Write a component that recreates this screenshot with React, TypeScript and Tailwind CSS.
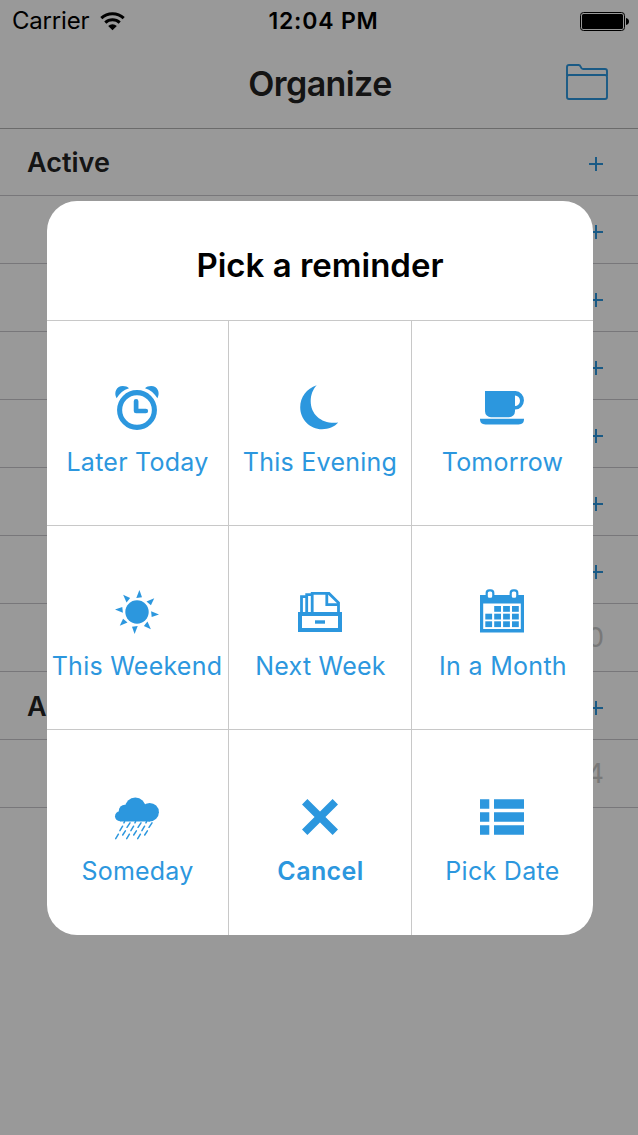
import type { ReactNode } from "react";

function Glyph({ children }: { children: ReactNode }) {
  return (
    <svg viewBox="0 0 44 44" className="h-11 w-11 shrink-0 overflow-visible" fill="currentColor">
      {children}
    </svg>
  );
}

const AlarmIcon = () => (
  <Glyph>
    <circle cx="22" cy="24" r="17.4" fill="none" stroke="currentColor" strokeWidth="5.1" />
    <path d="M21.1 15.3V25H30.8" fill="none" stroke="currentColor" strokeWidth="4.7" strokeLinecap="round" strokeLinejoin="round" />
    <path d="M1.6 12.3C-1.6 6.4 1.6 0 7.8 0C10.4 0 12.6.8 14 2.2C8.6 3.9 4.4 7.4 1.6 12.3Z" />
    <path d="M42.4 12.3C45.6 6.4 42.4 0 36.2 0C33.6 0 31.4.8 30 2.2C35.4 3.9 39.6 7.4 42.4 12.3Z" />
  </Glyph>
);

const MoonIcon = () => (
  <Glyph>
    <path d="M18.7-.8C8.5 2.6 2.2 11 2.2 21.2C2.2 33.4 11.8 43.2 24 43.2C30.6 43.2 36.4 41 40.2 36.6C24.5 38.6 12.7 29 12.7 15.2C12.7 8.8 14.9 3.2 18.7-.8Z" />
  </Glyph>
);

const CupIcon = () => (
  <Glyph>
    <path fillRule="evenodd" d="M5 5H35.5A8.7 9.2 0 0 1 35 23.4V25.3A6 6 0 0 1 29 31.3H11A6 6 0 0 1 5 25.3ZM35 9.4V20A5 5.3 0 0 0 35 9.4Z" />
    <path d="M0 32.8H44C44 36.6 42.5 38.4 38.5 38.4H5.5C1.5 38.4 0 36.6 0 32.8Z" />
  </Glyph>
);

const SunIcon = () => (
  <Glyph>
    <circle cx="22" cy="22" r="11.7" />
    {[0, 45, 90, 135, 180, 225, 270, 315].map((angle) => (
      <path key={angle} d="M24.4 0L21.3 7.9L27 7.3Z" transform={`rotate(${angle} 22 22)`} />
    ))}
  </Glyph>
);

const DrawerIcon = () => (
  <Glyph>
    <path fillRule="evenodd" d="M0 22H44V42H0ZM4 26V38H40V26Z" />
    <path d="M17 30.3H27V33.7H17Z" />
    <path d="M3.5 23V6.7H8.5M8.7 23V4.6H13.5M14.2 23V3.4H31L40.5 12.8V23M28.8 3.4V14.6H40.5" fill="none" stroke="currentColor" strokeWidth="2.8" />
  </Glyph>
);

const CalendarIcon = () => (
  <Glyph>
    <path fillRule="evenodd" d="M0 5H44V42.4H0ZM3.2 13.4V39H40.8V13.4Z" />
    {[16, 23.7, 31.3].map((y, row) =>
      [5.3, 14.2, 23.1, 32].map((x, column) =>
        row === 0 && column === 0 ? null : <rect key={`${x}-${y}`} x={x} y={y} width="6.8" height="5.8" />,
      ),
    )}
    {[10, 34].map((cx) => (
      <rect key={cx} x={cx - 3.3} y="0.3" width="6.6" height="8.6" rx="2.6" className="fill-white" stroke="currentColor" strokeWidth="2.2" />
    ))}
  </Glyph>
);

const RainIcon = () => (
  <Glyph>
    <circle cx="5" cy="21.3" r="5" />
    <circle cx="9.8" cy="15.8" r="6" />
    <circle cx="20.3" cy="12.7" r="10.3" />
    <circle cx="34.6" cy="17.2" r="9.3" />
    <path d="M5 14H35V26.4H5Z" />
    <g fill="none" stroke="currentColor" strokeWidth="1.5" strokeLinecap="round">
      {[0, 11, 22].map((dx) => (
        <path
          key={dx}
          transform={`translate(${dx} 0)`}
          d="M9.6 26.6L8.9 27.9M7.6 31.2L4.9 35.6M3.4 39.2L.7 43.6M15 27.9L12 32.3M10.4 35.8L7.7 40"
        />
      ))}
    </g>
  </Glyph>
);

const CloseIcon = () => (
  <Glyph>
    <path d="M6.7 6.7L37.3 37.3M37.3 6.7L6.7 37.3" fill="none" stroke="currentColor" strokeWidth="7.6" />
  </Glyph>
);

const ListIcon = () => (
  <Glyph>
    <path d="M0 4.2H9.3V13.8H0ZM14 4.2H44V13.8H14ZM0 17.2H9.3V26.8H0ZM14 17.2H44V26.8H14ZM0 30.2H9.3V39.8H0ZM14 30.2H44V39.8H14Z" />
  </Glyph>
);

const options = [
  { label: "Later Today", icon: <AlarmIcon />, text: "pl-px tracking-[0.25px]" },
  { label: "This Evening", icon: <MoonIcon />, text: "tracking-[0.25px]" },
  { label: "Tomorrow", icon: <CupIcon />, text: "pl-px tracking-[0.2px]" },
  { label: "This Weekend", icon: <SunIcon />, text: "tracking-[0.25px]" },
  { label: "Next Week", icon: <DrawerIcon />, text: "pl-px tracking-[0.25px]" },
  { label: "In a Month", icon: <CalendarIcon />, text: "pl-[2px] tracking-[0.3px]" },
  { label: "Someday", icon: <RainIcon />, text: "pl-px tracking-[0.2px]" },
  { label: "Cancel", icon: <CloseIcon />, text: "pl-px font-semibold tracking-[0.4px]" },
  { label: "Pick Date", icon: <ListIcon />, text: "pl-px tracking-[0.3px]" },
];

const rows = [
  { title: "Active", value: "+" },
  { value: "+" },
  { value: "+" },
  { value: "+" },
  { value: "+" },
  { value: "+" },
  { value: "+" },
  { value: "0" },
  { title: "Archive", value: "+" },
  { value: "4" },
];

function StatusBar() {
  return (
    <div className="grid h-10 grid-cols-3 items-center text-black">
      <div className="flex items-center pl-3">
        <span className="w-[88px] text-[24px] leading-10 tracking-[-0.2px]">Carrier</span>
        <svg width="25" height="19" viewBox="0 0 25 19">
          <path d="M1.3 6.2A16.2 16.2 0 0 1 23.7 6.2M5.3 10.6A10.4 10.4 0 0 1 19.7 10.6" fill="none" stroke="currentColor" strokeWidth="3" />
          <path d="M12.5 18.2L8.2 13.9A6.2 6.2 0 0 1 16.8 13.9Z" fill="currentColor" />
        </svg>
      </div>
      <span className="pl-[9px] text-center text-[23px] font-semibold leading-[42px] tracking-[0.8px] whitespace-nowrap">12:04 PM</span>
      <svg width="49" height="19" viewBox="0 0 49 19" className="mr-[9px] justify-self-end">
        <rect x=".5" y=".5" width="44" height="18" rx="3" fill="none" stroke="currentColor" />
        <rect x="2" y="2" width="41" height="15" rx="1.5" fill="currentColor" />
        <path d="M46 6C48 6.5 49 7.8 49 9.5S48 12.5 46 13Z" fill="currentColor" />
      </svg>
    </div>
  );
}

export default function App() {
  return (
    <div className="relative h-[1135px] w-[638px] overflow-hidden bg-white font-['Inter',sans-serif] text-[#222]">
      <header className="flex h-[129px] flex-col border-b border-[#b2b2b2]">
        <StatusBar />
        <div className="grid flex-1 grid-cols-[1fr_auto_1fr] items-center">
          <h1 className="col-start-2 pl-[2px] text-[34px] font-semibold leading-[88px] tracking-[-0.6px]">Organize</h1>
          <svg width="42" height="36" viewBox="0 0 42 36" className="mr-[30px] mb-[4px] justify-self-end text-[#2c97de]" fill="none" stroke="currentColor" strokeWidth="1.9">
            <path d="M1 12V3Q1 1 3 1H12.5Q14 1 14.7 2.8Q15.3 5 17 5H39Q41 5 41 7V12M1 13Q1 11 3 11H39Q41 11 41 13V33Q41 35 39 35H3Q1 35 1 33Z" />
          </svg>
        </div>
      </header>

      <ul>
        {rows.map((row, index) => (
          <li key={index} className="flex h-[68px] items-center justify-between border-b border-[#c8c7cc] pl-[27px] pr-[34px] first:h-[67px]">
            <span className="pt-[3px] text-[27px] font-semibold">{row.title}</span>
            {row.value === "+" ? (
              <svg width="14" height="14" viewBox="0 0 14 14" className="mt-1 mr-px text-[#2c97de]">
                <path d="M7 0V14M0 7H14" stroke="currentColor" strokeWidth="2" />
              </svg>
            ) : (
              <span className="mt-0.5 text-[27px] text-[#c8c8c8]">{row.value}</span>
            )}
          </li>
        ))}
      </ul>

      <div className="absolute inset-0 bg-black/40 pt-[201px] pl-[47px]">
        <section className="h-[734px] w-[546px] overflow-hidden rounded-[30px] bg-white">
          <h2 className="flex h-[120px] items-center justify-center border-b border-[#c8c8c8] pt-[10px] text-[33px] font-semibold tracking-[0px] text-black">
            Pick a reminder
          </h2>
          <div className="grid grid-cols-[182px_183px_181px] grid-rows-[205px_204px_205px] text-[#2c97de]">
            {options.map((option) => (
              <button
                key={option.label}
                className="flex flex-col items-center gap-[10px] border-r border-b border-[#c8c8c8] pt-[65px] nth-[n+4]:pt-[64px] nth-[n+7]:pt-[65px] nth-[3n]:border-r-0 nth-[3n]:pr-px nth-[3n+1]:pr-px nth-[n+7]:border-b-0"
              >
                {option.icon}
                <span className={`text-[25px] leading-[44px] whitespace-nowrap ${option.text}`}>{option.label}</span>
              </button>
            ))}
          </div>
        </section>
      </div>
    </div>
  );
}
